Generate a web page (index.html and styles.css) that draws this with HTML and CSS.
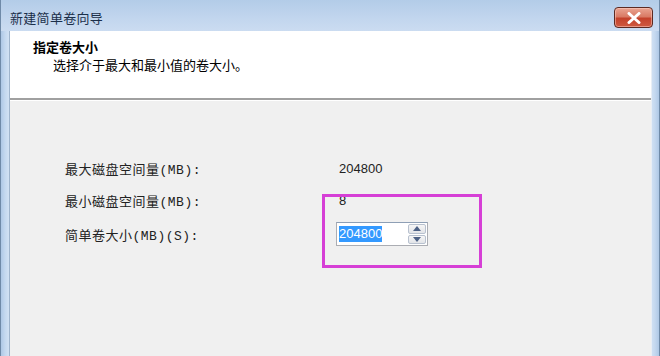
FILE: index.html
```html
<!DOCTYPE html>
<html>
  <head>
    <meta charset='utf-8'>
    <title>新建简单卷向导</title>
    <link rel="stylesheet" href="styles.css">
  </head>
  <body>
    <div class="window">
      <div class="titlebar">
        <span class="title">新建简单卷向导</span>
        <button class="close">
          <svg width="16" height="12" viewBox="0 0 16 12">
            <path d="M3 1.5 L13 10.5 M13 1.5 L3 10.5" stroke="#fff" stroke-width="3" stroke-linecap="round"/>
          </svg>
        </button>
      </div>
      <div class="client">
        <div class="header">
          <h1>指定卷大小</h1>
          <p>选择介于最大和最小值的卷大小。</p>
        </div>
        <div class="body">
          <div class="row">
            <span class="label">最大磁盘空间量(MB):</span>
            <span class="value">204800</span>
          </div>
          <div class="row">
            <span class="label">最小磁盘空间量(MB):</span>
            <span class="value">8</span>
          </div>
          <div class="row size">
            <span class="label">简单卷大小(MB)(S):</span>
            <div class="spin">
              <div class="field"><span class="sel">204800</span></div>
              <div class="arrows">
                <div class="arrow"><svg width="8" height="5" viewBox="0 0 8 5"><path d="M0 5 L4 0 L8 5 Z" fill="#4d6185"/></svg></div>
                <div class="arrow"><svg width="8" height="5" viewBox="0 0 8 5"><path d="M0 0 L4 5 L8 0 Z" fill="#4d6185"/></svg></div>
              </div>
            </div>
          </div>
          <div class="mark"></div>
        </div>
      </div>
    </div>
  </body>
</html>
```

FILE: styles.css
```css
html, body, h1, p {
    margin: 0;
    padding: 0;
}
body {
    width: 660px;
    height: 356px;
    overflow: hidden;
    font-family: "Noto Sans CJK SC", "Liberation Sans", sans-serif;
    font-size: 12px;
    color: #000;
}
.window {
    height: 356px;
    display: flex;
    flex-direction: column;
    background: linear-gradient(to right, #aec8e6 0, #c4d8ef 4px, #d2e2f4 8px, #d2e2f4 calc(100% - 8px), #c4d8ef calc(100% - 4px), #aec8e6 100%);
    border-left: 1px solid #6f8aa8;
    border-right: 1px solid #6f8aa8;
}
.titlebar {
    height: 31px;
    flex: none;
    display: flex;
    align-items: flex-start;
    justify-content: space-between;
    padding: 0 6px 0 9px;
    background: linear-gradient(#b3cce8, #c2d6ee 60%, #cbdcf1);
}
.title {
    font-size: 13px;
    line-height: 14px;
    margin-top: 11px;
    color: #1b2f4a;
    letter-spacing: 0.3px;
}
.close {
    width: 39px;
    height: 21px;
    margin-top: 7px;
    border: 1px solid #5c2a22;
    border-radius: 4px;
    padding: 0;
    display: flex;
    align-items: center;
    justify-content: center;
    background: linear-gradient(#eaa592, #d97b65 45%, #c4422b 55%, #cf5a40);
    box-shadow: inset 0 0 0 1px rgba(255, 210, 200, 0.5);
}
.client {
    flex: 1;
    margin: 0 7px 0 8px;
    display: flex;
    flex-direction: column;
    border-left: 1px solid #9fb4cc;
    border-right: 1px solid #e8eef5;
}
.header {
    background: #fff;
    border-bottom: 2px solid #a0a0a0;
    box-shadow: 0 1px 0 #fff;
    padding: 7px 0 0 23px;
    box-sizing: border-box;
    height: 69px;
}
.header h1 {
    font-size: 13px;
    font-weight: bold;
    line-height: 18px;
}
.header p {
    font-size: 13px;
    line-height: 18px;
    padding-left: 20px;
}
.body {
    flex: 1;
    position: relative;
    background: #f0f0f0;
    padding: 58px 0 0 55px;
    margin-top: 1px;
}
.row {
    display: flex;
    align-items: center;
    height: 18px;
    margin-bottom: 14px;
}
.label {
    width: 274px;
    font-family: "Liberation Mono", "Noto Sans CJK SC", monospace;
    font-size: 13px;
    letter-spacing: 0.5px;
    color: #222;
}
.value {
    font-family: "Liberation Sans", sans-serif;
    font-size: 13px;
    color: #222;
}
.row.size {
    height: 24px;
    margin-top: -1px;
}
.spin {
    display: flex;
    margin-left: -3px;
    height: 24px;
    border: 1px solid #abadb3;
    border-top-color: #8e9fb5;
    background: #fff;
    box-sizing: border-box;
    width: 92px;
}
.field {
    flex: 1;
    display: flex;
    align-items: center;
    padding-left: 2px;
}
.sel {
    background: #3399ff;
    color: #fff;
    font-family: "Liberation Sans", sans-serif;
    font-size: 13px;
    line-height: 16px;
}
.arrows {
    width: 18px;
    display: flex;
    flex-direction: column;
    gap: 1px;
    padding: 1px 1px 1px 0;
}
.arrow {
    flex: 1;
    display: flex;
    align-items: center;
    justify-content: center;
    border: 1px solid #b8c1cf;
    border-radius: 2px;
    background: linear-gradient(#f6f6f6, #e2e4e8);
}
.mark {
    position: absolute;
    left: 312px;
    top: 93px;
    width: 160px;
    height: 74px;
    border: 3px solid #d63fd6;
    box-sizing: border-box;
}
```
